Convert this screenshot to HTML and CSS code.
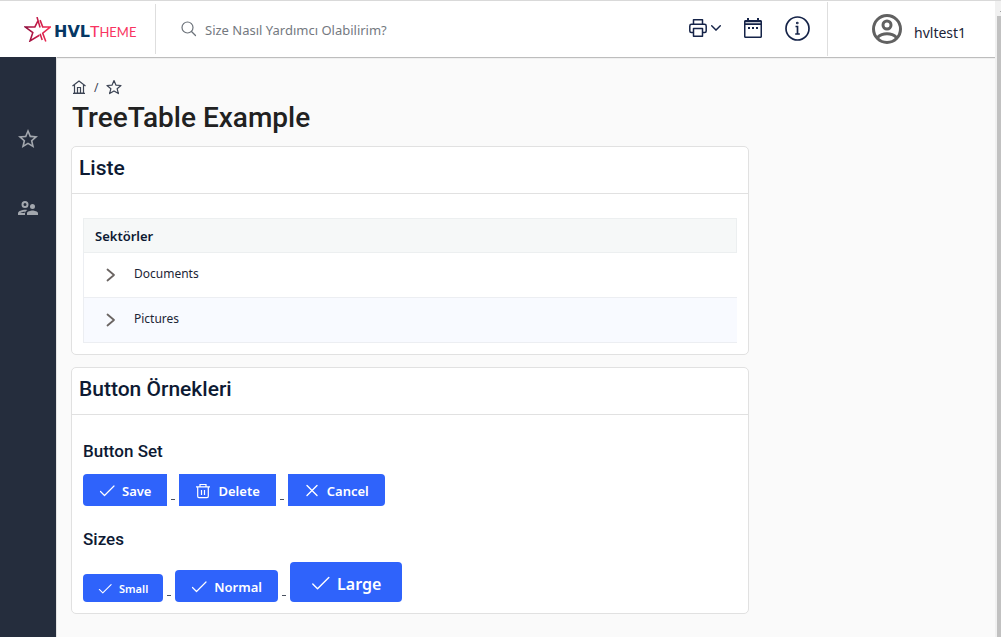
FILE: index.html
```html
<!DOCTYPE html>
<html lang="tr">
<head>
<meta charset="utf-8">
<title>TreeTable Example</title>
<link rel="stylesheet" href="styles.css">
</head>
<body>
<svg class="defs" width="0" height="0" aria-hidden="true">
  <symbol id="check" viewBox="0 0 16 16"><path d="M1.500 8.500l4 4L15 3" fill="none" stroke="currentColor" stroke-width="1.200" stroke-linecap="round" stroke-linejoin="round"/></symbol>
  <symbol id="chevron" viewBox="0 0 16 16"><path d="M5.500 2.500L12 8l-6.500 5.500" fill="none" stroke="currentColor" stroke-width="1.800" stroke-linecap="round" stroke-linejoin="round"/></symbol>
  <symbol id="star" viewBox="0 0 24 24"><path d="M22 9.240l-7.190-.62L12 2 9.190 8.630 2 9.240l5.460 4.730L5.820 21 12 17.270 18.180 21l-1.630-7.030L22 9.240zM12 15.400l-3.760 2.270 1-4.280-3.320-2.880 4.380-.38L12 6.100l1.710 4.040 4.380.38-3.320 2.880 1 4.280L12 15.400z" fill="currentColor"/></symbol>
</svg>
<div class="page">
  <div class="app">
    <header class="topbar">
      <a class="brand" href="#" aria-label="HVL Theme">
        <svg class="brand-mark" viewBox="0 0 26 24" fill="none" stroke-width="1.500">
          <defs><linearGradient id="flare" x1="0" x2="1"><stop offset="0" stop-color="#8e0c3c"/><stop offset="1" stop-color="#fb2c55"/></linearGradient></defs>
          <path d="M15.500 10L12.500 0M13.300 4L10.500 9.500H1l7.500 5.500-2.700 8 9-5.500M15.500 3l2.500 6.500H25.500L18 15.500l3 8M15.500 16l2 6" stroke="url(#flare)"/>
        </svg>
        <span class="brand-text">HVL<span class="brand-sub">T<small>HEME</small></span></span>
      </a>
      <label class="search">
        <svg class="icon16" viewBox="0 0 16 16" fill="none" stroke="currentColor" stroke-width="1.200"><circle cx="6.500" cy="6.500" r="5.500"/><path d="M10.500 10.500L14.500 14.500" stroke-linecap="round"/></svg>
        <input type="text" class="search-input" placeholder="Size Nasıl Yardımcı Olabilirim?" aria-label="Arama">
      </label>
      <nav class="tools">
        <button class="tool" aria-label="Yazdır">
          <svg class="printer" viewBox="0 0 18 18" fill="none" stroke="currentColor" stroke-width="1.500" stroke-linejoin="round"><path d="M4.500 5V.8h9V5M4.500 13.500H2.300C1.400 13.500.8 12.900.8 12V7c0-1 .6-1.700 1.700-1.700h13c1 0 1.700.7 1.700 1.700v5c0 .9-.6 1.500-1.500 1.500h-2.200M4.500 9.500h9v7.700h-9z"/></svg>
          <svg class="caret" viewBox="0 0 10 6" fill="none" stroke="currentColor" stroke-width="1.400"><path d="M.7.800L5 5.100 9.300.8" stroke-linecap="round"/></svg>
        </button>
        <button class="tool" aria-label="Takvim">
          <svg class="calendar" viewBox="0 0 20 22" fill="currentColor"><path fill-rule="evenodd" d="M17.500 3H16V1h-2v2H6V1H4v2H2.500C1.600 3 1 3.700 1 4.500v15c0 .8.600 1.500 1.500 1.500h15c.9 0 1.500-.7 1.500-1.500v-15c0-.8-.6-1.500-1.500-1.500zm0 16.500h-15V8h15zM2.500 5.200h15v1h-15zM5 10h2v2H5zm4 0h2v2H9zm4 0h2v2h-2z"/></svg>
        </button>
        <button class="tool" aria-label="Bilgi">
          <svg class="info" viewBox="0 0 25 25" fill="none" stroke="currentColor" stroke-width="1.700"><circle cx="12.500" cy="12.500" r="11.500"/><path d="M10.500 10.500h2V18M10.200 18h4.600"/><circle cx="12.300" cy="7" r=".5"/></svg>
        </button>
      </nav>
      <button class="user">
        <svg class="avatar" viewBox="0 0 30 30" fill="none" stroke="currentColor" stroke-width="3"><circle cx="15" cy="15" r="13.500"/><circle cx="15" cy="11" r="4"/><path d="M5.500 23.500c5-5 14-5 19 0"/></svg>
        <span>hvltest1</span>
      </button>
    </header>
    <div class="body">
      <nav class="sidebar">
        <a href="#" aria-label="Favoriler"><svg class="side-icon"><use href="#star"/></svg></a>
        <a href="#" aria-label="Kullanıcılar"><svg class="side-icon" viewBox="0 0 24 24" fill="currentColor"><path d="M16.500 13a2.500 2.500 0 1 0 0-5 2.500 2.500 0 0 0 0 5zM9 12a3.500 3.500 0 1 0 0-7 3.500 3.500 0 0 0 0 7zm0-5a1.500 1.500 0 1 1 0 3 1.500 1.500 0 0 1 0-3zM16.500 14.500c-1.830 0-5.500.92-5.500 2.750V19h11v-1.750c0-1.830-3.670-2.750-5.500-2.750zM9 17.500c0-.85.330-2.340 2.370-3.470C10.500 13.850 9.660 13.750 9 13.750c-2.340 0-7 1.170-7 3.500V19h7zm-4.660-.5c.84-.58 2.870-1.250 4.660-1.250l-.5 1.250z"/></svg></a>
      </nav>
      <main class="main">
        <nav class="crumbs">
          <a href="#" aria-label="Ana sayfa"><svg class="home" viewBox="0 0 14 14" fill="none" stroke="currentColor" stroke-width="1.200"><path d="M.5 6L7 1l6.500 5M2.500 5v8h9V5M5.500 13V7.500h3V13M1 13.300h12"/></svg></a>
          <span>/</span>
          <a href="#" aria-label="Favorilere ekle"><svg class="crumb-star" viewBox="0 0 16 16" fill="none" stroke="currentColor" stroke-width="1.200" stroke-linejoin="round"><path d="M8 1.500l2 4.700 5 .3-3.900 3.200 1.300 4.900L8 11.900l-4.400 2.700 1.300-4.900L1 6.500l5-.3z"/></svg></a>
        </nav>
        <h1 class="title">TreeTable Example</h1>
        <section class="card">
          <h2 class="card-title">Liste</h2>
          <div class="card-body">
            <table class="tree">
              <thead><tr><th scope="col">Sektörler</th></tr></thead>
              <tbody>
                <tr><td><div class="node"><button class="toggle" aria-label="Documents"><svg class="icon16"><use href="#chevron"/></svg></button><span>Documents</span></div></td></tr>
                <tr><td><div class="node"><button class="toggle" aria-label="Pictures"><svg class="icon16"><use href="#chevron"/></svg></button><span>Pictures</span></div></td></tr>
              </tbody>
            </table>
          </div>
        </section>
        <section class="card">
          <h2 class="card-title">Button Örnekleri</h2>
          <div class="card-body">
            <h3 class="group-title">Button Set</h3>
            <div class="buttons">
              <button class="btn start"><svg class="icon16"><use href="#check"/></svg>Save</button>
              <span class="dash"></span>
              <button class="btn middle"><svg class="icon16" viewBox="0 0 16 16" fill="none" stroke="currentColor" stroke-width="1.200"><path d="M1 3.800h14M5 3.800V1.500h6v2.300M2.700 3.800v9.500c0 .8.500 1.300 1.300 1.300h8c.8 0 1.300-.5 1.300-1.300V3.800M6.500 7v5M9.500 7v5"/></svg>Delete</button>
              <span class="dash"></span>
              <button class="btn end"><svg class="icon16" viewBox="0 0 16 16" fill="none" stroke="currentColor" stroke-width="1.400" stroke-linecap="round"><path d="M3 2.500l10 10M13 2.500l-10 10"/></svg>Cancel</button>
            </div>
            <h3 class="group-title">Sizes</h3>
            <div class="buttons">
              <button class="btn small"><svg class="icon16"><use href="#check"/></svg>Small</button>
              <span class="dash"></span>
              <button class="btn"><svg class="icon16"><use href="#check"/></svg>Normal</button>
              <span class="dash"></span>
              <button class="btn large"><svg class="icon16"><use href="#check"/></svg>Large</button>
            </div>
          </div>
        </section>
      </main>
    </div>
  </div>
  <div class="scroll"><span class="scroll-arrow"></span><span class="scroll-thumb"></span></div>
</div>
</body>
</html>
```

FILE: styles.css
```css
* { box-sizing: border-box; }
body { margin: 0; background: #fafafa; color: #0d1a33; font-family: "Noto Sans", Roboto, sans-serif; font-size: 14px; }
button { font: inherit; color: inherit; background: none; border: 0; padding: 0; cursor: pointer; }
a { color: inherit; text-decoration: none; }
svg { display: block; flex: none; }
h1, h2, h3 { margin: 0; font-family: Roboto, sans-serif; }
.defs { position: absolute; }
.icon16 { width: 16px; height: 16px; }

.page { display: flex; min-height: 100vh; border-top: 1px solid #d9d9d9; }
.app { flex: 1; display: flex; flex-direction: column; }
.scroll { width: 6px; background: #f1f1f1; padding-left: 2px; display: flex; flex-direction: column; overflow: hidden; }
.scroll-arrow { width: 8px; height: 15px; background: linear-gradient(135deg, transparent 50%, #a3a3a3 50%) 2px 8px / 4px 3px no-repeat; }
.scroll-thumb { flex: 1; background: #c1c1c1; }

.topbar { display: flex; align-items: center; height: 56px; background: #fff; box-shadow: 0 1px 1px #bdbdbd; }
.brand { width: 156px; height: 50px; border-right: 1px solid #dedede; display: flex; align-items: center; gap: 3px; padding-left: 24px; }
.brand-mark { width: 27px; height: 25px; }
.brand-text { font: 700 16px/20px "DejaVu Sans", sans-serif; color: #053764; display: flex; align-items: baseline; padding-top: 5px; }
.brand-sub { font-family: Lato, sans-serif; font-weight: 400; color: #f83461; }
.brand-sub small { font-size: 13px; }
.search { flex: 1; display: flex; align-items: center; gap: 8px; padding-left: 25px; color: #6c727a; }
.search-input { border: 0; outline: 0; padding: 2px 0 0; flex: 1; min-width: 0; font: 13px/20px "Noto Sans", sans-serif; color: inherit; background: none; }
.search-input::placeholder { color: #74797f; opacity: 1; }
.tools { display: flex; align-items: center; gap: 22px; padding: 0 17px 2px 0; color: #152348; }
.tool { display: flex; align-items: center; gap: 4px; }
.printer { width: 18px; height: 18px; }
.caret { width: 10px; height: 6px; }
.calendar { width: 20px; height: 22px; }
.info { width: 25px; height: 25px; }
.user { display: flex; align-items: center; gap: 12px; width: 168px; height: 54px; border-left: 1px solid #dedede; padding: 0 0 0 44px; font-size: 14px; color: #1b2437; }
.user span { padding-top: 6px; }
.avatar { width: 30px; height: 30px; color: #616161; }

.body { flex: 1; display: flex; }
.sidebar { width: 56px; background: #252d3d; color: #a3a7ae; display: flex; flex-direction: column; align-items: center; gap: 45px; padding-top: 70px; }
.side-icon { width: 24px; height: 24px; }
.main { flex: 1; padding: 20px 20px 20px 14px; border-left: 1px solid #e3e3e3; }
.crumbs { display: flex; align-items: center; gap: 8px; height: 20px; color: #3c4454; font-size: 12px; padding-left: 1px; }
.home { width: 14px; height: 14px; }
.crumb-star { width: 16px; height: 16px; }
.title { font-size: 28px; line-height: 40px; font-weight: 500; color: #212121; padding: 1px 0 8px 1px; }

.card { width: 75%; background: #fff; border: 1px solid #e1e1e1; border-radius: 5px; margin-bottom: 12px; }
.card-title { font-size: 21px; line-height: 30px; font-weight: 500; padding: 6px 7px 10px; border-bottom: 1px solid #e1e1e1; }
.card-body { padding: 24px 11px 11px; }
.tree { width: 100%; border-collapse: collapse; color: #1c2536; }
.tree th { height: 34px; padding: 1px 11px 0; text-align: left; background: #f6f8f8; border: 1px solid #eceff0; font-weight: 600; font-size: 13px; color: #0d1a33; }
.tree td { height: 45px; padding: 0; border: 1px solid #eceef2; border-right: 0; }
.tree tr:nth-child(even) td { background: #f8faff; }
.node { display: flex; align-items: center; gap: 16px; padding-left: 18px; font-size: 12px; }
.node span { padding-bottom: 3px; }
.toggle { color: #6a6462; }

.group-title { font-size: 17px; line-height: 24px; font-weight: 500; padding-bottom: 11px; }
.buttons { display: flex; align-items: flex-end; gap: 4px; }
.buttons + .group-title { padding-top: 21px; }
.btn { display: flex; align-items: center; gap: 7px; height: 32px; padding: 1px 16px 0; background: #2f63fb; color: #fff; border-radius: 4px; font-weight: 600; font-size: 13px; }
.btn.start { border-radius: 4px 0 0 4px; }
.btn.middle { border-radius: 0; }
.btn.end { border-radius: 0 4px 4px 0; }
.btn.small { height: 28px; font-size: 11px; padding: 1px 15px 0; }
.btn.small svg { width: 14px; height: 14px; }
.btn.large { height: 40px; font-size: 16px; padding: 3px 21px 0; }
.btn.large svg { width: 19px; height: 19px; }
.dash { width: 4px; height: 1px; margin-bottom: 6px; background: #4a5260; }
```
